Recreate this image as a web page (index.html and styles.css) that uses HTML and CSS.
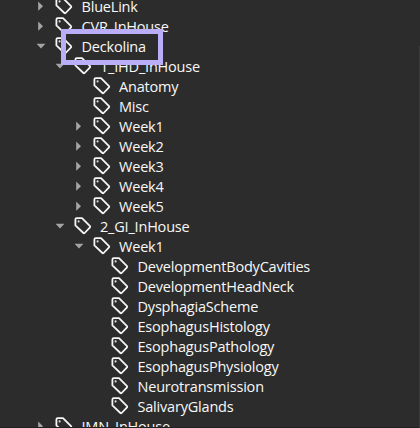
FILE: index.html
```
<!DOCTYPE html>
<html lang="en">
<head>
<meta charset="utf-8">
<title>Tags</title>
<link rel="stylesheet" href="styles.css">
</head>
<body>
<svg class="defs" aria-hidden="true">
  <symbol id="tag" viewBox="0 0 18 18"><path class="outline" d="M1.4 2.6Q1.4 1.2 2.8 1.2H8L16 9.2Q16.5 9.8 16 10.4L10.6 16Q10 16.5 9.4 16L1.4 8.4Z"/><circle class="hole" cx="4.6" cy="4.4" r="1.05"/></symbol>
  <symbol id="closed" viewBox="0 0 10 10"><path d="M2.2 0.6L7 5.2L2.2 9.8Z"/></symbol>
  <symbol id="open" viewBox="0 0 10 10"><path d="M0.6 2.8H9.4L5 7.6Z"/></symbol>
</svg>
<main class="tree" id="tree"></main>
<div class="highlight"></div>
<script src="tree.js"></script>
</body>
</html>
```
FILE: styles.css
```
body {
  margin: 0;
  height: 428px;
  overflow: hidden;
  background: #2c2c2c;
  color: #f8f8f8;
  font: 14.5px/20px "Open Sans", "Noto Sans", sans-serif;
  position: relative;
}
.defs { position: absolute; width: 0; height: 0; }
.tree {
  box-sizing: border-box;
  height: 428px;
  overflow: hidden;
  border-bottom: 1px solid #202020;
  display: flex;
  flex-direction: column;
}
.row {
  display: flex;
  align-items: center;
  flex: none;
  height: 20px;
  padding-left: 36px;
}
.row:first-child { margin-top: -4px; }
.level-1 { padding-left: 54.5px; }
.level-2 { padding-left: 73.5px; }
.level-3 { padding-left: 92px; }
.arrow { width: 10px; height: 10px; margin-right: 9px; fill: #a5a5a5; }
.tag { width: 18px; height: 18px; margin-right: 8.5px; flex: none; }
.outline { fill: none; stroke: #f5f5f5; stroke-width: 1.8; stroke-linejoin: round; }
.hole { fill: #e0e0e0; }
.label { white-space: nowrap; letter-spacing: -0.2px; padding-top: 2px; }
.highlight {
  position: absolute;
  box-sizing: border-box;
  left: 61px;
  top: 29px;
  width: 102px;
  height: 36px;
  border: 5px solid #b9aef7;
}
body::after {
  content: "";
  position: absolute;
  right: 0;
  top: 46px;
  bottom: 0;
  width: 1px;
  background: #3b3b3b;
}
```
FILE: tree.js
```
const rows = [
  [0, "closed", "BlueLink"], [0, "closed", "CVR_InHouse"], [0, "open", "Deckolina"],
  [1, "open", "1_IHD_InHouse"], [2, "", "Anatomy"], [2, "", "Misc"],
  [2, "closed", "Week1"], [2, "closed", "Week2"], [2, "closed", "Week3"],
  [2, "closed", "Week4"], [2, "closed", "Week5"], [1, "open", "2_GI_InHouse"],
  [2, "open", "Week1"], [3, "", "DevelopmentBodyCavities"], [3, "", "DevelopmentHeadNeck"],
  [3, "", "DysphagiaScheme"], [3, "", "EsophagusHistology"], [3, "", "EsophagusPathology"],
  [3, "", "EsophagusPhysiology"], [3, "", "Neurotransmission"], [3, "", "SalivaryGlands"],
  [0, "closed", "IMN_InHouse"]
];
document.getElementById("tree").innerHTML = rows.map(([level, state, name]) =>
  `<div class="row level-${level}"><svg class="arrow">${state ? `<use href="#${state}"/>` : ""}</svg><svg class="tag"><use href="#tag"/></svg><span class="label">${name}</span></div>`
).join("");
```
